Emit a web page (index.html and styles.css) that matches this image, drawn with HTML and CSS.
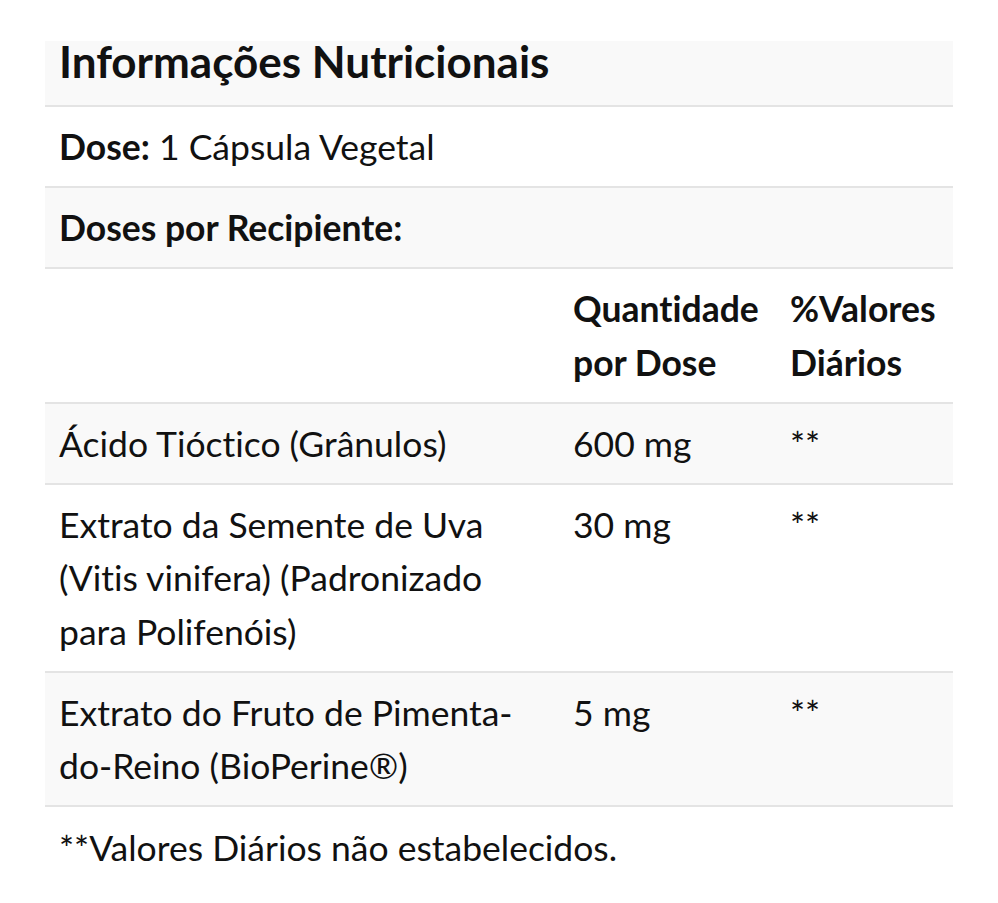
FILE: index.html
```html
<!DOCTYPE html>
<html lang="pt">
<head>
<meta charset="utf-8">
<title>Informações Nutricionais</title>
<link rel="stylesheet" href="styles.css">
</head>
<body>
<div class="panel">
  <table class="facts">
    <colgroup>
      <col class="c-name">
      <col class="c-qty">
      <col class="c-dv">
    </colgroup>
    <tbody>
      <tr class="stripe title-row"><th colspan="3" class="title">Informações Nutricionais</th></tr>
      <tr><td colspan="3"><b>Dose:</b> 1 Cápsula Vegetal</td></tr>
      <tr class="stripe"><td colspan="3"><b>Doses por Recipiente:</b></td></tr>
      <tr class="head"><td></td><th>Quantidade por Dose</th><th>%Valores Diários</th></tr>
      <tr class="stripe"><td>Ácido Tióctico (Grânulos)</td><td>600 mg</td><td class="dv">**</td></tr>
      <tr><td>Extrato da Semente de Uva (Vitis vinifera) (Padronizado para Polifenóis)</td><td>30 mg</td><td class="dv">**</td></tr>
      <tr class="stripe"><td>Extrato do Fruto de Pimenta-do-Reino (BioPerine®)</td><td>5 mg</td><td class="dv">**</td></tr>
    </tbody>
  </table>
  <p class="note">**Valores Diários não estabelecidos.</p>
</div>
</body>
</html>
```
FILE: styles.css
```css
html, body {
  margin: 0;
  padding: 0;
  background: #ffffff;
}
body {
  font-family: Lato, "Open Sans", "Liberation Sans", sans-serif;
  color: #111111;
  font-variant-ligatures: none;
}
.panel {
  padding: 41px 45px 0 45px;
}
.facts {
  width: 908px;
  border-collapse: collapse;
  font-size: 35.5px;
  line-height: 53.5px;
}
.c-name { width: 514px; }
.c-qty { width: 217px; }
.c-dv { width: 177px; }
.facts td, .facts th {
  padding: 13px 14px 12.5px 14px;
  text-align: left;
  vertical-align: top;
  border-bottom: 2px solid #e4e4e4;
}
.facts th { font-weight: 700; }
.facts b { font-weight: 700; }
.stripe { background: #f9f9f9; }
.title-row .title {
  font-size: 44px;
  line-height: 40px;
  padding: 0 14px 24px 14px;
}
.note {
  margin: 14px 0 0 14px;
  font-size: 35.5px;
  line-height: 53px;
}
```
